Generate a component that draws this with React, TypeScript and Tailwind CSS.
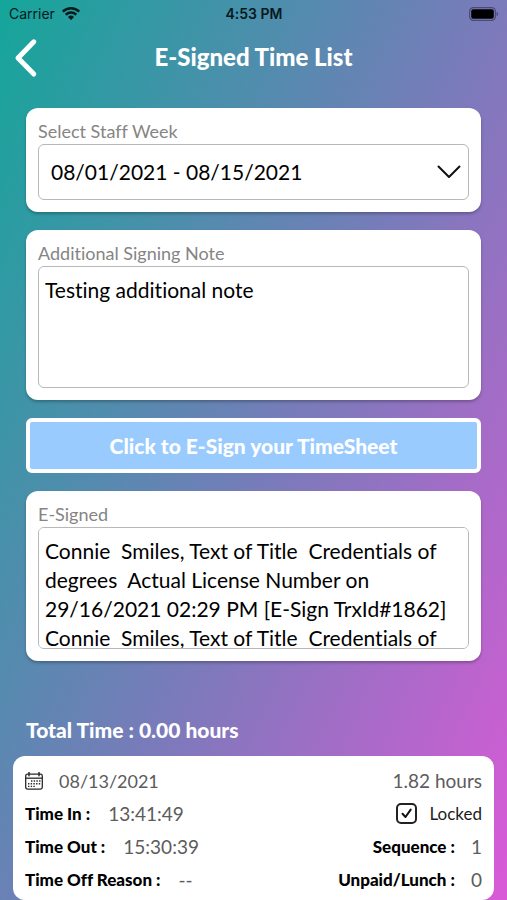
import React, {useState} from 'react';

const WifiIcon = () => (
    <svg className="w-[18px] h-[14px]" viewBox="0 0 18 14" fill="#06191b" aria-hidden="true">
        <path d="M9 0C5.600 0 2.500 1.300.2 3.500a.4.4 0 0 0 0 .6l1.200 1.200a.4.4 0 0 0 .6 0A10 10 0 0 1 9 2.500a10 10 0 0 1 7 2.800.4.4 0 0 0 .6 0l1.200-1.200a.4.4 0 0 0 0-.6A12.700 12.700 0 0 0 9 0z"/>
        <path d="M9 4.300a8.400 8.400 0 0 0-5.800 2.300.4.4 0 0 0 0 .6l1.200 1.200a.4.4 0 0 0 .6 0A5.800 5.800 0 0 1 9 6.800c1.500 0 2.900.6 4 1.600a.4.4 0 0 0 .6 0l1.200-1.200a.4.4 0 0 0 0-.6A8.400 8.400 0 0 0 9 4.300z"/>
        <path d="M9 8.600c-1.100 0-2.100.4-2.800 1.100a.4.4 0 0 0 0 .6l2.500 2.500a.4.4 0 0 0 .6 0l2.500-2.500a.4.4 0 0 0 0-.6A4 4 0 0 0 9 8.600z"/>
    </svg>
);

const BatteryIcon = () => (
    <svg className="w-[30px] h-[14px]" viewBox="0 0 30 14" aria-hidden="true">
        <rect x="0.600" y="0.600" width="25.800" height="12.800" rx="4" fill="none" stroke="#4b4b74" strokeWidth="1.200"/>
        <rect x="2.200" y="2.200" width="22.600" height="9.600" rx="2" fill="#000"/>
        <path d="M27.600 4.800c1 .4 1.500 1.200 1.500 2.200s-.5 1.800-1.500 2.200z" fill="#4b4b74"/>
    </svg>
);

const CalendarIcon = () => (
    <svg className="w-[18px] h-[18px]" viewBox="0 0 18 18" fill="none" stroke="#2a2a2a" aria-hidden="true">
        <rect x="0.700" y="2.200" width="16.600" height="14.900" rx="1.800" strokeWidth="1.300"/>
        <path d="M.7 6.200h16.600" strokeWidth="1.300"/>
        <path d="M4 .4v3.400M14 .4v3.400" strokeWidth="1.500" strokeLinecap="round"/>
        <path d="M6 9h9.600M3 11.700h12.600M3 14.400h7" strokeWidth="1.400" strokeDasharray="1.400 1.300"/>
    </svg>
);

const cardClass = "bg-white rounded-xl p-3 shadow-[0_2px_3px_rgba(0,0,0,0.25)]";
const labelClass = "block h-6 text-[18px] leading-[22px] text-[#858585]";
const areaClass = "block w-full h-[122px] px-[6px] pt-2 rounded-md border border-[#b8b8b8] bg-white text-[21px] leading-[29px] text-black resize-none outline-none overflow-y-auto [scrollbar-width:none]";
const nameClass = "text-[17px] font-black text-black";

const signed = "Connie  Smiles, Text of Title  Credentials of degrees  Actual License Number on 29/16/2021 02:29 PM [E-Sign TrxId#1862]";

const App = () => {
    const [note, setNote] = useState('Testing additional note');

    return (
        <div className="h-screen flex flex-col overflow-hidden font-['Lato',sans-serif] [font-variant-ligatures:none] bg-linear-to-br/srgb from-[#14a69a] via-[#7c7abb] to-[#ef52dd] bg-[length:100%_122%] bg-no-repeat">
            <div className="grid grid-cols-3 items-center h-7 pl-[9px] pr-2 shrink-0 font-['Inter',sans-serif] text-sm text-[#06191b]">
                <div className="flex items-center gap-[7px]">
                    <span>Carrier</span>
                    <WifiIcon/>
                </div>
                <span className="text-center font-semibold">4:53 PM</span>
                <div className="flex justify-end">
                    <BatteryIcon/>
                </div>
            </div>

            <header className="grid grid-cols-[48px_1fr_48px] items-center h-[60px] shrink-0">
                <button type="button" aria-label="Back" className="pl-[14px]">
                    <svg className="w-6 h-10" viewBox="0 0 24 40" fill="none" stroke="#fff" strokeWidth="5"
                         strokeLinecap="round" strokeLinejoin="round">
                        <path d="M19.800 3.800 4 20l15.800 16"/>
                    </svg>
                </button>
                <h1 className="pb-[2px] text-center text-2xl font-black text-white">E-Signed Time List</h1>
            </header>

            <main className="flex-1 min-h-0 overflow-y-auto [scrollbar-width:none] pt-5">
                <div className="flex flex-col gap-[18px] px-[26px]">
                    <div className={cardClass}>
                        <label htmlFor="week" className={labelClass}>Select Staff Week</label>
                        <div className="relative">
                            <select id="week"
                                    className="appearance-none block w-full h-[56px] px-3 rounded-md border border-[#b8b8b8] bg-white text-[21px] text-black outline-none">
                                <option>08/01/2021 - 08/15/2021</option>
                            </select>
                            <svg className="absolute right-2 top-5 w-6 h-4 pointer-events-none" viewBox="0 0 24 16"
                                 fill="none" stroke="#111" strokeWidth="2" strokeLinecap="round" strokeLinejoin="round">
                                <path d="M1.500 2.500 12 13 22.500 2.500"/>
                            </svg>
                        </div>
                    </div>

                    <div className={cardClass}>
                        <label htmlFor="note" className={labelClass}>Additional Signing Note</label>
                        <textarea id="note" value={note} onChange={e => setNote(e.target.value)} className={areaClass}/>
                    </div>

                    <button type="button"
                            className="h-[55px] rounded-md border-4 border-white bg-[#99cbff] text-[21px] font-black text-white">
                        Click to E-Sign your TimeSheet
                    </button>

                    <div className={cardClass}>
                        <label htmlFor="signed" className={labelClass}>E-Signed</label>
                        <textarea id="signed" readOnly value={signed + '\n' + signed} className={areaClass}/>
                    </div>
                </div>

                <h2 className="mt-[55px] px-[26px] text-[21px] leading-7 font-black text-white">Total Time : 0.00 hours</h2>

                <div className="mt-3 mx-[13px] px-3 pt-2 pb-1 bg-white rounded-xl text-[19px] leading-8 text-[#5c5c5c]">
                    <div className="flex items-center justify-between h-[33px]">
                        <div className="flex items-center gap-4">
                            <CalendarIcon/>
                            <span className="text-[18px]">08/13/2021</span>
                        </div>
                        <span>1.82 hours</span>
                    </div>
                    <div className="flex items-center justify-between h-[33px]">
                        <div className="flex items-center gap-[18px]">
                            <b className={nameClass}>Time In :</b>
                            <span>13:41:49</span>
                        </div>
                        <label className="flex items-center gap-3 text-[17px] text-[#1c1c1c]">
                            <span className="relative flex">
                                <input type="checkbox" defaultChecked
                                       className="peer appearance-none w-[21px] h-[21px] rounded-[5px] border-2 border-[#222]"/>
                                <svg className="absolute inset-0 w-[21px] h-[21px] hidden peer-checked:block pointer-events-none"
                                     viewBox="0 0 21 21" fill="none" stroke="#111" strokeWidth="2" strokeLinecap="round"
                                     strokeLinejoin="round">
                                    <path d="m6.500 10.800 3 3.200 5.200-7.400"/>
                                </svg>
                            </span>
                            Locked
                        </label>
                    </div>
                    <div className="flex items-center justify-between h-[33px]">
                        <div className="flex items-center gap-[18px]">
                            <b className={nameClass}>Time Out :</b>
                            <span>15:30:39</span>
                        </div>
                        <div className="flex items-center gap-4">
                            <b className={nameClass}>Sequence :</b>
                            <span>1</span>
                        </div>
                    </div>
                    <div className="flex items-center justify-between h-[33px]">
                        <div className="flex items-center gap-[18px]">
                            <b className={nameClass}>Time Off Reason :</b>
                            <span>--</span>
                        </div>
                        <div className="flex items-center gap-4">
                            <b className={nameClass}>Unpaid/Lunch :</b>
                            <span>0</span>
                        </div>
                    </div>
                </div>
            </main>
        </div>
    );
}

export default App
